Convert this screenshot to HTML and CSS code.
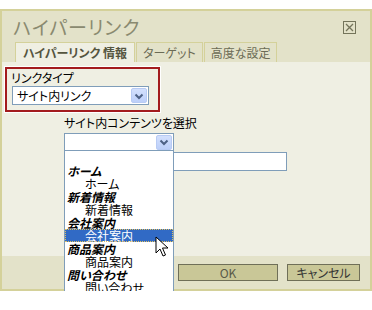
FILE: index.html
```html
<!DOCTYPE html>
<html lang="ja">
<head>
<meta charset="utf-8">
<link rel="stylesheet" href="styles.css">
</head>
<body>
<div class="dialog">
  <div class="header">
    <div class="titlebar">
      <span class="title">ハイパーリンク</span>
      <span class="close">
        <svg width="13" height="13" viewBox="0 0 13 13"><rect x="0.5" y="0.5" width="12" height="12" fill="none" stroke="#74745a"/><path d="M3 3 L10 10 M10 3 L3 10" stroke="#74745a" stroke-width="1.3"/></svg>
      </span>
    </div>
    <div class="tabs">
      <div class="tab active">ハイパーリンク 情報</div>
      <div class="tab">ターゲット</div>
      <div class="tab">高度な設定</div>
    </div>
  </div>
  <div class="content">
    <div class="linktype">
      <div class="label">リンクタイプ</div>
      <div class="select wide">
        <span class="value">サイト内リンク</span>
        <span class="arrow"><svg width="16" height="16" viewBox="0 0 16 16"><path d="M4.5 6.5 L8 10 L11.5 6.5" fill="none" stroke="#4d6185" stroke-width="2"/></svg></span>
      </div>
    </div>
    <div class="pick">
      <div class="label">サイト内コンテンツを選択</div>
      <div class="combo">
        <div class="select narrow">
          <span class="value"></span>
          <span class="arrow"><svg width="16" height="16" viewBox="0 0 16 16"><path d="M4.5 6.5 L8 10 L11.5 6.5" fill="none" stroke="#4d6185" stroke-width="2"/></svg></span>
        </div>
        <ul class="listbox">
          <li class="opt"></li>
          <li class="grp">ホーム</li>
          <li class="opt">ホーム</li>
          <li class="grp">新着情報</li>
          <li class="opt">新着情報</li>
          <li class="grp">会社案内</li>
          <li class="opt sel">会社案内</li>
          <li class="grp">商品案内</li>
          <li class="opt">商品案内</li>
          <li class="grp">問い合わせ</li>
          <li class="opt">問い合わせ</li>
        </ul>
        <svg class="cursor" width="14" height="22" viewBox="0 0 14 22"><path d="M1 1 L1 17 L5 13 L8 20 L10.5 19 L7.5 12 L13 12 Z" fill="#fff" stroke="#000" stroke-width="1"/></svg>
      </div>
      <div class="textbox"></div>
    </div>
  </div>
  <div class="footer">
    <button class="btn ok">OK</button>
    <button class="btn cancel">キャンセル</button>
  </div>
</div>
</body>
</html>
```
FILE: styles.css
```css
body {
  margin: 0;
  background: #fff;
  font-family: "Noto Sans CJK JP", sans-serif;
  font-size: 12px;
  font-feature-settings: "palt";
  color: #000;
}
.dialog {
  margin-top: 9px;
  width: 372px;
  box-sizing: border-box;
  border: 2px solid #d4d19a;
}
.header {
  background: #e3e2c9;
  height: 51px;
  box-sizing: border-box;
  padding-top: 3px;
}
.titlebar {
  display: flex;
  justify-content: space-between;
  align-items: center;
  height: 26px;
  padding: 0 14px 0 11px;
}
.title {
  font-size: 19px;
  line-height: 26px;
  color: #8a8a70;
  letter-spacing: 1px;
}
.close {
  display: flex;
}
.tabs {
  display: flex;
  gap: 1px;
  margin: 2px 0 0 13px;
  height: 20px;
}
.tab {
  height: 20px;
  box-sizing: border-box;
  border: 1px solid #d4d19a;
  border-bottom: none;
  padding: 0 6px;
  line-height: 19px;
  color: #6b6b55;
  background: #e3e2c9;
}
.tab.active {
  background: #efefe3;
  font-weight: bold;
  color: #55553f;
  padding: 0 7px;
}
.content {
  background: #efefe3;
  height: 194px;
  padding-top: 5px;
  box-sizing: border-box;
}
.linktype {
  margin-left: 3px;
  width: 155px;
  box-sizing: border-box;
  border: 2px solid #a31b1e;
  outline: 1px solid #fff;
  padding: 2px 0 5px 4px;
}
.label {
  line-height: 14px;
}
.select {
  display: flex;
  align-items: center;
  justify-content: space-between;
  box-sizing: border-box;
  border: 1px solid #7f9db9;
  background: #fff;
  padding: 0 1px 0 4px;
}
.select.wide {
  margin: 1px 0 0 1px;
  width: 137px;
  height: 19px;
}
.select.narrow {
  width: 110px;
  height: 18px;
}
.value {
  line-height: 16px;
}
.arrow {
  display: flex;
  width: 16px;
  height: 15px;
  box-sizing: border-box;
  border: 1px solid #b8cbf4;
  border-radius: 2px;
  background: linear-gradient(#d3e0fd, #bccff9);
  justify-content: center;
  align-items: center;
  overflow: hidden;
}
.arrow svg {
  flex: none;
}
.pick {
  margin-top: 4px;
  padding-left: 62px;
}
.combo {
  position: relative;
  margin-top: 3px;
}
.listbox {
  position: absolute;
  left: 0;
  top: 17px;
  width: 110px;
  height: 144px;
  box-sizing: border-box;
  margin: 0;
  padding: 0;
  list-style: none;
  background: #fff;
  border: 1px solid #7f9db9;
  border-bottom: none;
  overflow: hidden;
  z-index: 2;
}
.listbox li {
  height: 13px;
  line-height: 13px;
  white-space: nowrap;
}
.grp {
  font-weight: bold;
  font-style: italic;
  padding-left: 2px;
}
.opt {
  padding-left: 20px;
}
.opt.sel {
  background: #316ac5;
  color: #fff;
  outline: 1px dotted #e0c060;
  outline-offset: -1px;
}
.cursor {
  position: absolute;
  left: 91px;
  top: 103px;
  z-index: 3;
}
.textbox {
  margin-top: 1px;
  width: 223px;
  height: 19px;
  box-sizing: border-box;
  border: 1px solid #7f9db9;
  background: #fff;
}
.footer {
  background: #e3e2c9;
  height: 33px;
  box-sizing: border-box;
  padding: 8px 10px 0 0;
  display: flex;
  justify-content: flex-end;
  align-items: flex-start;
  gap: 9px;
}
.btn {
  height: 17px;
  box-sizing: border-box;
  border: 1px solid #6f6f58;
  background: #c9c797;
  font-family: inherit;
  font-size: 12px;
  font-feature-settings: "palt";
  line-height: 14px;
  padding: 0;
  color: #333;
}
.btn.ok {
  width: 100px;
  color: #5a5a48;
}
.btn.cancel {
  width: 73px;
}
```
